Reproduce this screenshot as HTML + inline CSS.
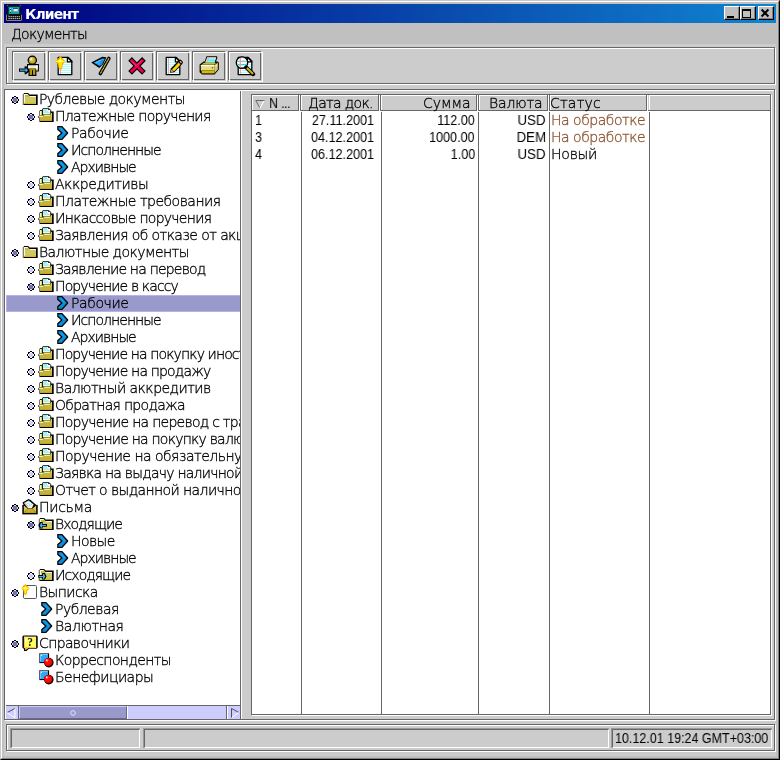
<!DOCTYPE html>
<html lang="ru"><head><meta charset="utf-8"><title>Клиент</title>
<style>
*{box-sizing:border-box;margin:0;padding:0}
html,body{width:780px;height:760px;overflow:hidden;background:#c0c0c0}
body{position:relative;font-family:"Liberation Sans",sans-serif;font-size:13px;color:#000;line-height:17px}
.a{position:absolute}
.root{position:absolute;left:0;top:0;width:780px;height:760px}
.cy,.lat,.ttext{will-change:transform}
.win{left:0;top:0;width:780px;height:760px;background:#c0c0c0;border-style:solid;border-width:1px;border-color:#c8c8c8 #000 #000 #c8c8c8}
.win2{left:1px;top:1px;width:778px;height:758px;border-style:solid;border-width:1px;border-color:#fff #808080 #808080 #fff}
.title{left:4px;top:4px;width:772px;height:19px;background:linear-gradient(90deg,#000080 0%,#1084d0 100%)}
.ttext{left:24.5px;top:5px;height:19px;line-height:19px;color:#fff;font-family:"DejaVu Sans","Liberation Sans",sans-serif;font-weight:bold;font-size:14px;letter-spacing:-.95px;white-space:nowrap}
.cb{top:6px;width:16px;height:14px;background:#c0c0c0;border-style:solid;border-width:1px;border-color:#fff #000 #000 #fff}
.cb i{position:absolute;left:0;top:0;right:0;bottom:0;border-style:solid;border-width:0 1px 1px 0;border-color:#808080}
.java{left:4px;top:44px;width:772px;height:712px;background:#cccccc}
.menu{left:11px;top:26px;height:17px;line-height:17px;white-space:nowrap}
.cy{font-family:"DejaVu Sans","Liberation Sans",sans-serif;font-weight:200;font-size:14px;letter-spacing:-.6px;-webkit-text-stroke:.3px currentColor}
.tb{top:51px;width:33px;height:29px;border:1px solid #666}
.tb:after{content:"";position:absolute;left:0;top:0;width:32px;height:28px;border-style:solid;border-color:#fff;border-width:1px 0 0 1px}
.tb:before{content:"";position:absolute;left:0px;top:0px;width:33px;height:29px;border-style:solid;border-color:#fff;border-width:0 1px 1px 0}
.tb svg{position:absolute;left:0;top:0}
.tree{left:5px;top:90px;width:235px;height:615px;background:#fff;overflow:hidden}
.row{position:absolute;left:0;height:17px;line-height:17px;white-space:nowrap}
.row span{position:absolute;top:0;white-space:nowrap}
.row svg{position:absolute;top:0}
.sel{left:1px;width:234px;background:#9999cc;border:1px solid #b4b4ea;border-right:0}
.lat{font-size:14px;transform:scaleX(.9);transform-origin:0 50%}
.latr{transform-origin:100% 50%}
.cell{position:absolute;height:17px;line-height:17px;white-space:nowrap}
.hd{position:absolute;top:94px;height:17px;border:1px solid #666;border-width:1px 1px 1px 1px;background:#cccccc}
.st{color:#8c5430}
</style></head>
<body>
<div class="a win"></div><div class="a win2"></div>
<div class="a title"></div>
<svg width="18" height="18" viewBox="0 0 18 18" style="position:absolute;left:5px;top:4px"><rect x="1.1" y="10.4" width="15.8" height="6.3" rx="1.2" fill="#b0b094"/><rect x="1.9" y="10.6" width="14.2" height="5.4" fill="#080808"/><path d="M3.4 12.7 H15 M3.4 14.6 H15" stroke="#c4c4c4" stroke-width="1" stroke-dasharray="1.5 .55"/><rect x="2.2" y="1.2" width="13.6" height="9.7" fill="#0c0c0c"/><rect x="2.2" y="1.2" width="1" height="1" fill="#909078"/><rect x="14.8" y="1.2" width="1" height="1" fill="#909078"/><rect x="3.7" y="2.9" width="10.6" height="7" fill="#14b0b0"/><rect x="3.7" y="2.9" width="10.6" height="1" fill="#109898"/><rect x="8.1" y="4" width="4.8" height="1" fill="#1848c8"/><rect x="8.6" y="5" width="4.1" height="2.6" fill="#f4ecec"/><rect x="8.6" y="7.6" width="4.1" height=".5" fill="#905050"/><rect x="4.9" y="4" width="1.2" height=".8" fill="#c8ffff"/><rect x="6.4" y="4.2" width="1.6" height=".4" fill="#60e8e8"/><rect x="6.4" y="5.4" width="1.6" height=".3" fill="#40d0d0"/><rect x="5" y="5.1" width="1" height=".9" fill="#101010"/><rect x="5.2" y="6" width=".7" height="2" fill="#e8f0f0"/><rect x="5" y="8" width="1" height=".9" fill="#101010"/><rect x="2.9" y="10.7" width="1.5" height=".9" fill="#0c8c30"/></svg>
<div class="a ttext">Клиент</div>
<div class="a cb" style="left:724px"><i></i><svg width="14" height="12" viewBox="0 0 14 12" style="position:absolute;left:0;top:0"><rect x="2" y="9" width="7" height="2" fill="#000"/></svg></div>
<div class="a cb" style="left:740px"><i></i><svg width="14" height="12" viewBox="0 0 14 12" style="position:absolute;left:0;top:0"><rect x="1.5" y="2.5" width="8" height="8" fill="none" stroke="#000" stroke-width="1"/><rect x="1" y="2" width="9" height="2" fill="#000"/></svg></div>
<div class="a cb" style="left:758px"><i></i><svg width="14" height="12" viewBox="0 0 14 12" style="position:absolute;left:0;top:0"><path d="M2.6 2.6 L9.4 9.4 M9.4 2.6 L2.6 9.4" stroke="#000" stroke-width="2.1" fill="none"/></svg></div>
<div class="a java"></div>
<div class="a menu cy" style="letter-spacing:-0.75px">Документы</div>
<div class="a" style="left:7px;top:48px;width:769px;height:37px;border:1px solid #fff"></div><div class="a" style="left:6px;top:47px;width:769px;height:37px;border:1px solid #666;"></div>
<div class="a tb" style="left:12px"><svg width="33" height="29" viewBox="0 0 33 29" style="position:absolute;left:-1px;top:-1px"><path d="M7 17.6 H12.6 V15.2 H14.2 L15 16 V13.1 H26.9 V20.6 H24.4 V25 H16.5 V21 L14.2 23.2 H12.6 V20.8 H7 Z" fill="#000"/><circle cx="20.3" cy="9.3" r="4.7" fill="#000"/><circle cx="20.3" cy="9.3" r="3.5" fill="#a88e14"/><circle cx="20" cy="9" r="2.9" fill="#c4b034"/><circle cx="19.6" cy="8.5" r="2" fill="#dccc58"/><circle cx="19.2" cy="8" r="1" fill="#fff8cc"/><rect x="16.1" y="14.3" width="9.6" height="3.2" fill="#fff"/><rect x="24.2" y="14.3" width="1.5" height="5.2" fill="#fff"/><rect x="17.8" y="15.3" width="5.4" height="1.5" fill="#e0e0e0"/><rect x="17.6" y="17.6" width="2.4" height="6.2" fill="#b8980c"/><rect x="21" y="17.6" width="2.3" height="6.2" fill="#b8980c"/><rect x="17.6" y="17.4" width="5.7" height="1.8" fill="#a48808"/><path d="M8 18.6 H13.6 V16.8 L16 19.2 L13.6 21.6 V19.8 H8 Z" fill="#38b4ff"/></svg></div>
<div class="a tb" style="left:48px"><svg width="33" height="29" viewBox="0 0 33 29" style="position:absolute;left:-1px;top:-1px"><path d="M10.2 6.4 H20.3 L23.8 9.9 V23.6 H10.2 Z" fill="#fff" stroke="#000" stroke-width="1.3" stroke-linejoin="round"/><path d="M11 11.5H23M11 13.5H23M11 15.5H23M11 17.5H23M11 19.5H23M11 21.5H23" stroke="#a8fcfc" stroke-width="1.1"/><path d="M11 8H19.5M11 9.7H19.5" stroke="#a8fcfc" stroke-width="1.1"/><path d="M12.5 7V23" stroke="#ffa0a8" stroke-width="1"/><path d="M19.4 6.4 V10.9 H23.9 Z" fill="#fff" stroke="#000" stroke-width="1.3" stroke-linejoin="round"/><g transform="translate(12.4 10.4) scale(1)"><path d="M0 -5.5 L2.2 -3 L5.4 0 L2.5 2.6 L1.8 7 L0 8.7 L-1.8 7 L-2.5 2.6 L-5.4 0 L-2.2 -3 Z" fill="#ffa400"/><path d="M0 -4.1 L1.5 -1.7 L4.4 0 L1.5 1.7 L1 6.5 L-1 6.5 L-1.5 1.7 L-4.4 0 L-1.5 -1.7 Z" fill="#fff400"/><rect x="-5" y="-.6" width="9.6" height="1.2" fill="#ffff10"/><rect x="-1.2" y="-1.2" width="2.2" height="1.8" fill="#fffff4"/></g></svg></div>
<div class="a tb" style="left:84px"><svg width="33" height="29" viewBox="0 0 33 29" style="position:absolute;left:-1px;top:-1px"><path d="M24.9 7.4 L16.3 22.6" stroke="#000" stroke-width="3.5" stroke-linecap="round"/><path d="M24.9 7.4 L16.3 22.6" stroke="#ffe050" stroke-width="1.15" stroke-dasharray="1.2 .35"/><path d="M7.2 11.6 L18.3 5.8 L22.4 6.2 L19.3 13 L15.3 17 L12.3 15 Z" fill="#000"/><path d="M9.6 11.7 L18.6 7.5 L20.8 7.8 L18 13.2 L15.3 15 L13.2 13.6 Z" fill="#28a8f8"/><path d="M16.6 9.4 L15.2 15.4 L17.8 13.4 L19.8 8.6 Z" fill="#1890e0"/><path d="M11.6 11.4 L17 8.8" stroke="#70ccff" stroke-width=".8"/></svg></div>
<div class="a tb" style="left:120px"><svg width="33" height="29" viewBox="0 0 33 29" style="position:absolute;left:-1px;top:-1px"><path d="M11.9 9.8 L22.1 20.1 M22.1 9.8 L11.9 20.1" stroke="#000" stroke-width="5.2" stroke-linecap="square"/><path d="M11.9 9.8 L22.1 20.1 M22.1 9.8 L11.9 20.1" stroke="#e4004c" stroke-width="3" stroke-linecap="square"/><path d="M11.6 10.2 L16.6 15.2 M21.6 9.6 L17.6 13.6" stroke="#ff5a8c" stroke-width=".8"/></svg></div>
<div class="a tb" style="left:156px"><svg width="33" height="29" viewBox="0 0 33 29" style="position:absolute;left:-1px;top:-1px"><path d="M10.2 6.4 H20.3 L23.8 9.9 V23.6 H10.2 Z" fill="#fff" stroke="#000" stroke-width="1.3" stroke-linejoin="round"/><path d="M11 11.5H23M11 13.5H23M11 15.5H23M11 17.5H23M11 19.5H23M11 21.5H23" stroke="#a8fcfc" stroke-width="1.1"/><path d="M11 8H19.5M11 9.7H19.5" stroke="#a8fcfc" stroke-width="1.1"/><path d="M12.5 7V23" stroke="#ffa0a8" stroke-width="1"/><path d="M19.4 6.4 V10.9 H23.9 Z" fill="#fff" stroke="#000" stroke-width="1.3" stroke-linejoin="round"/><path d="M14 21.8 L14.8 17.6 L22.6 9.4 L24.6 8.6 L27 11 L26.2 13 L18.4 21.2 Z" fill="#000"/><path d="M16.2 18.4 L22.6 11.6 L24.4 13.4 L18 20.2 Z" fill="#ffe800"/><path d="M16.2 18.4 L22.6 11.6 L23.2 12.2 L16.8 19 Z" fill="#ffb000"/><path d="M17.5 19.7 L23.9 12.9 L24.4 13.4 L18 20.2 Z" fill="#ffb000"/><path d="M23.4 10.8 L24.6 9.7 L26 11.2 L25 12.4 Z" fill="#ff8c94"/><path d="M14.9 21 L15.5 18.6 L17.6 20.6 Z" fill="#f0d8a0"/><path d="M14.8 21.3 L15.1 20.2 L15.9 21 Z" fill="#a06810"/></svg></div>
<div class="a tb" style="left:192px"><svg width="33" height="29" viewBox="0 0 33 29" style="position:absolute;left:-1px;top:-1px"><path d="M7.6 13.6 L11.6 10.6 H12.6 L14.6 5.2 H25 L25.4 6.6 L24 10.4 H25.6 L26.8 11.4 V18.6 L22.6 23.4 H10 L7.6 21.2 Z" fill="#000"/><path d="M15.2 6.2 H24.3 L22.6 11.6 H13.2 Z" fill="#fff"/><path d="M15 8 H23.5 M14.4 9.8 H23 M13.8 11.2 H22.6" stroke="#30e0e8" stroke-width="1.1"/><path d="M16.8 6.2 L15 11.6" stroke="#ff9c90" stroke-width=".9"/><path d="M9.2 13.8 L12 11.8 H24.4 L22.2 13.8 Z" fill="#c8b838"/><rect x="8.8" y="14" width="13.8" height="5" fill="#e4dc88"/><rect x="8.8" y="14" width="13.8" height="1.2" fill="#fffce0"/><rect x="8.8" y="19" width="13.8" height="1" fill="#a08c10"/><rect x="9.6" y="20" width="12.6" height="2.4" fill="#d0b818"/><path d="M22.6 14 L25.8 11.6 V18.2 L22.4 22.4 Z" fill="#d8cc60"/><path d="M23.4 14.4 L25.2 13 V15 L23.4 16.6 Z" fill="#f0eab0"/><path d="M19.2 16.2 H21.4 L20.8 18 Z" fill="#607818"/></svg></div>
<div class="a tb" style="left:228px"><svg width="33" height="29" viewBox="0 0 33 29" style="position:absolute;left:-1px;top:-1px"><path d="M10.2 6.4 H20.3 L23.8 9.9 V23.6 H10.2 Z" fill="#fff" stroke="#000" stroke-width="1.3" stroke-linejoin="round"/><path d="M11 11.5H23M11 13.5H23M11 15.5H23M11 17.5H23M11 19.5H23M11 21.5H23" stroke="#a8fcfc" stroke-width="1.1"/><path d="M11 8H19.5M11 9.7H19.5" stroke="#a8fcfc" stroke-width="1.1"/><path d="M12.5 7V23" stroke="#ffa0a8" stroke-width="1"/><path d="M19.4 6.4 V10.9 H23.9 Z" fill="#fff" stroke="#000" stroke-width="1.3" stroke-linejoin="round"/><circle cx="14" cy="11.6" r="5.7" fill="#fff" stroke="#000" stroke-width="1.4"/><path d="M9.3 10.2 H18.7 M9.3 13.6 H18.7" stroke="#20d8dc" stroke-width="1.1"/><path d="M12.3 7 V16.4" stroke="#ff98a0" stroke-width="1.3"/><path d="M18.2 16.4 L25.2 23.2" stroke="#000" stroke-width="4" stroke-linecap="round"/><path d="M18.8 17 L25 23" stroke="#c8a408" stroke-width="1.9" stroke-linecap="butt"/><path d="M19.6 17 L25.4 22.6" stroke="#f0d850" stroke-width=".6"/></svg></div>
<div class="a" style="left:5px;top:90px;width:771px;height:631px;border:1px solid #fff"></div><div class="a" style="left:4px;top:89px;width:771px;height:631px;border:1px solid #666;"></div>
<div class="a tree"><div class="row" style="top:1px"><svg width="8" height="8" viewBox="0 0 8 8" style="left:6px;top:5px"><path d="M2 2h4v4h-4z" fill="#7272b2"/><path d="M3 1h1v1h-1zM4 1h1v1h-1zM1 3h1v1h-1zM1 4h1v1h-1zM6 3h1v1h-1zM6 4h1v1h-1zM3 6h1v1h-1zM4 6h1v1h-1z" fill="#dcdcff"/><path d="M3 0h1v1h-1zM4 0h1v1h-1zM1 1h1v1h-1zM2 1h1v1h-1zM5 1h1v1h-1zM6 1h1v1h-1zM1 2h1v1h-1zM6 2h1v1h-1zM0 3h1v1h-1zM7 3h1v1h-1zM0 4h1v1h-1zM7 4h1v1h-1zM1 5h1v1h-1zM6 5h1v1h-1zM1 6h1v1h-1zM2 6h1v1h-1zM5 6h1v1h-1zM6 6h1v1h-1zM3 7h1v1h-1zM4 7h1v1h-1z" fill="#000"/></svg><svg width="16" height="17" viewBox="0 0 16 17" style="left:17px;top:0px"><path d="M0.7 2.9 H2 V14 H0.7 Z" fill="#7c7c84"/><path d="M1.8 2.05 H6.1 L7.6 3.55 H15.7 V14 H1.8 Z" fill="#000"/><path d="M1.9 3.1 H5.8 L7.5 4.95 H14 V13 H1.9 Z" fill="#cec866"/><path d="M3 4 H6 L7.7 5.8 H3 Z" fill="#c6b838"/><path d="M1.9 3.1 H3 V12 H1.9 Z M1.9 3.1 H5.7 V3.9 H1.9 Z M7.9 5 H14 V5.9 H7.9 Z" fill="#fffad8"/><path d="M1.9 11.8 H14 V13 H1.9 Z" fill="#d8b814"/></svg><span class="cy" style="left:33.5px;letter-spacing:-0.57px">Рублевые документы</span></div><div class="row" style="top:18px"><svg width="8" height="8" viewBox="0 0 8 8" style="left:22px;top:5px"><path d="M2 2h4v4h-4z" fill="#7272b2"/><path d="M3 1h1v1h-1zM4 1h1v1h-1zM1 3h1v1h-1zM1 4h1v1h-1zM6 3h1v1h-1zM6 4h1v1h-1zM3 6h1v1h-1zM4 6h1v1h-1z" fill="#dcdcff"/><path d="M3 0h1v1h-1zM4 0h1v1h-1zM1 1h1v1h-1zM2 1h1v1h-1zM5 1h1v1h-1zM6 1h1v1h-1zM1 2h1v1h-1zM6 2h1v1h-1zM0 3h1v1h-1zM7 3h1v1h-1zM0 4h1v1h-1zM7 4h1v1h-1zM1 5h1v1h-1zM6 5h1v1h-1zM1 6h1v1h-1zM2 6h1v1h-1zM5 6h1v1h-1zM6 6h1v1h-1zM3 7h1v1h-1zM4 7h1v1h-1z" fill="#000"/></svg><svg width="17" height="17" viewBox="0 0 17 17" style="left:33px;top:0px"><path d="M4 1.2 L5 0.15 H10.9 L13.2 2.3 V3.6 H15.7 V14 H1.6 V10.6 L0.2 9.6 V8.4 L1.6 7.3 V2.9 L2 2.1 H4 Z" fill="#000"/><path d="M1.6 3 V13.6" stroke="#6c6c74" stroke-width="1"/><rect x="4.9" y="1" width="7.3" height="5.4" fill="#fff"/><rect x="4.9" y="1" width="4.2" height="1.9" fill="#88f4f4"/><rect x="10" y="1" width="2.2" height=".9" fill="#000"/><rect x="10" y="1.9" width="2.2" height="1.2" fill="#fff"/><rect x="5.2" y="3.2" width="5.4" height=".6" fill="#c8c8c8"/><rect x="5.1" y="4" width="7.1" height="1.3" fill="#98f8f8"/><rect x="2" y="2.9" width="1.9" height="4.2" fill="#fff4b0"/><rect x="3.2" y="2.9" width=".7" height="4.2" fill="#d8c440"/><path d="M1.3 8.3 L2.2 7.2 H6.1 V6 H14 V12.9 H2 V10.2 L1.3 9.6 Z" fill="#c2b444"/><rect x="6.1" y="6" width="7.9" height="1" fill="#a88c10"/><rect x="12.9" y="4.9" width="1.1" height="3.8" fill="#dccc50"/><rect x="6.3" y="7.2" width="5.5" height=".8" fill="#fff8d0"/><rect x="1.2" y="8.1" width="3.7" height=".9" fill="#fff8d0"/><rect x="2" y="11.9" width="12" height="1" fill="#caa408"/></svg><span class="cy" style="left:49.5px;letter-spacing:-0.68px">Платежные поручения</span></div><div class="row" style="top:35px"><svg width="13" height="17" viewBox="0 0 13 17" style="left:52px;top:0px"><path d="M0.2 1.1 H5.2 L11.2 7.4 V8.6 L5.2 14.9 H0.2 V11.2 L3.9 8 L0.2 4.8 Z" fill="#000"/><path d="M1.4 2.2 H4.7 L9.8 8 L4.7 13.8 H1.4 V11.9 L5.7 8 L1.4 4.1 Z" fill="#0c8cd8"/><path d="M3 3 H4.3 L8.6 8 L6.6 8 Z" fill="#10a0f0"/></svg><span class="cy" style="left:65.5px;letter-spacing:-0.40px">Рабочие</span></div><div class="row" style="top:52px"><svg width="13" height="17" viewBox="0 0 13 17" style="left:52px;top:0px"><path d="M0.2 1.1 H5.2 L11.2 7.4 V8.6 L5.2 14.9 H0.2 V11.2 L3.9 8 L0.2 4.8 Z" fill="#000"/><path d="M1.4 2.2 H4.7 L9.8 8 L4.7 13.8 H1.4 V11.9 L5.7 8 L1.4 4.1 Z" fill="#0c8cd8"/><path d="M3 3 H4.3 L8.6 8 L6.6 8 Z" fill="#10a0f0"/></svg><span class="cy" style="left:65.5px;letter-spacing:-0.97px">Исполненные</span></div><div class="row" style="top:69px"><svg width="13" height="17" viewBox="0 0 13 17" style="left:52px;top:0px"><path d="M0.2 1.1 H5.2 L11.2 7.4 V8.6 L5.2 14.9 H0.2 V11.2 L3.9 8 L0.2 4.8 Z" fill="#000"/><path d="M1.4 2.2 H4.7 L9.8 8 L4.7 13.8 H1.4 V11.9 L5.7 8 L1.4 4.1 Z" fill="#0c8cd8"/><path d="M3 3 H4.3 L8.6 8 L6.6 8 Z" fill="#10a0f0"/></svg><span class="cy" style="left:65.5px;letter-spacing:-0.99px">Архивные</span></div><div class="row" style="top:86px"><svg width="8" height="8" viewBox="0 0 8 8" style="left:22px;top:5px"><path d="M2 2h4v4h-4z" fill="#ccccff"/><path d="M3 1h1v1h-1zM4 1h1v1h-1zM1 3h1v1h-1zM1 4h1v1h-1zM6 3h1v1h-1zM6 4h1v1h-1zM3 6h1v1h-1zM4 6h1v1h-1z" fill="#ffffff"/><path d="M3 0h1v1h-1zM4 0h1v1h-1zM1 1h1v1h-1zM2 1h1v1h-1zM5 1h1v1h-1zM6 1h1v1h-1zM1 2h1v1h-1zM6 2h1v1h-1zM0 3h1v1h-1zM7 3h1v1h-1zM0 4h1v1h-1zM7 4h1v1h-1zM1 5h1v1h-1zM6 5h1v1h-1zM1 6h1v1h-1zM2 6h1v1h-1zM5 6h1v1h-1zM6 6h1v1h-1zM3 7h1v1h-1zM4 7h1v1h-1z" fill="#000"/></svg><svg width="17" height="17" viewBox="0 0 17 17" style="left:33px;top:0px"><path d="M4 1.2 L5 0.15 H10.9 L13.2 2.3 V3.6 H15.7 V14 H1.6 V10.6 L0.2 9.6 V8.4 L1.6 7.3 V2.9 L2 2.1 H4 Z" fill="#000"/><path d="M1.6 3 V13.6" stroke="#6c6c74" stroke-width="1"/><rect x="4.9" y="1" width="7.3" height="5.4" fill="#fff"/><rect x="4.9" y="1" width="4.2" height="1.9" fill="#88f4f4"/><rect x="10" y="1" width="2.2" height=".9" fill="#000"/><rect x="10" y="1.9" width="2.2" height="1.2" fill="#fff"/><rect x="5.2" y="3.2" width="5.4" height=".6" fill="#c8c8c8"/><rect x="5.1" y="4" width="7.1" height="1.3" fill="#98f8f8"/><rect x="2" y="2.9" width="1.9" height="4.2" fill="#fff4b0"/><rect x="3.2" y="2.9" width=".7" height="4.2" fill="#d8c440"/><path d="M1.3 8.3 L2.2 7.2 H6.1 V6 H14 V12.9 H2 V10.2 L1.3 9.6 Z" fill="#c2b444"/><rect x="6.1" y="6" width="7.9" height="1" fill="#a88c10"/><rect x="12.9" y="4.9" width="1.1" height="3.8" fill="#dccc50"/><rect x="6.3" y="7.2" width="5.5" height=".8" fill="#fff8d0"/><rect x="1.2" y="8.1" width="3.7" height=".9" fill="#fff8d0"/><rect x="2" y="11.9" width="12" height="1" fill="#caa408"/></svg><span class="cy" style="left:49.5px;letter-spacing:-0.46px">Аккредитивы</span></div><div class="row" style="top:103px"><svg width="8" height="8" viewBox="0 0 8 8" style="left:22px;top:5px"><path d="M2 2h4v4h-4z" fill="#ccccff"/><path d="M3 1h1v1h-1zM4 1h1v1h-1zM1 3h1v1h-1zM1 4h1v1h-1zM6 3h1v1h-1zM6 4h1v1h-1zM3 6h1v1h-1zM4 6h1v1h-1z" fill="#ffffff"/><path d="M3 0h1v1h-1zM4 0h1v1h-1zM1 1h1v1h-1zM2 1h1v1h-1zM5 1h1v1h-1zM6 1h1v1h-1zM1 2h1v1h-1zM6 2h1v1h-1zM0 3h1v1h-1zM7 3h1v1h-1zM0 4h1v1h-1zM7 4h1v1h-1zM1 5h1v1h-1zM6 5h1v1h-1zM1 6h1v1h-1zM2 6h1v1h-1zM5 6h1v1h-1zM6 6h1v1h-1zM3 7h1v1h-1zM4 7h1v1h-1z" fill="#000"/></svg><svg width="17" height="17" viewBox="0 0 17 17" style="left:33px;top:0px"><path d="M4 1.2 L5 0.15 H10.9 L13.2 2.3 V3.6 H15.7 V14 H1.6 V10.6 L0.2 9.6 V8.4 L1.6 7.3 V2.9 L2 2.1 H4 Z" fill="#000"/><path d="M1.6 3 V13.6" stroke="#6c6c74" stroke-width="1"/><rect x="4.9" y="1" width="7.3" height="5.4" fill="#fff"/><rect x="4.9" y="1" width="4.2" height="1.9" fill="#88f4f4"/><rect x="10" y="1" width="2.2" height=".9" fill="#000"/><rect x="10" y="1.9" width="2.2" height="1.2" fill="#fff"/><rect x="5.2" y="3.2" width="5.4" height=".6" fill="#c8c8c8"/><rect x="5.1" y="4" width="7.1" height="1.3" fill="#98f8f8"/><rect x="2" y="2.9" width="1.9" height="4.2" fill="#fff4b0"/><rect x="3.2" y="2.9" width=".7" height="4.2" fill="#d8c440"/><path d="M1.3 8.3 L2.2 7.2 H6.1 V6 H14 V12.9 H2 V10.2 L1.3 9.6 Z" fill="#c2b444"/><rect x="6.1" y="6" width="7.9" height="1" fill="#a88c10"/><rect x="12.9" y="4.9" width="1.1" height="3.8" fill="#dccc50"/><rect x="6.3" y="7.2" width="5.5" height=".8" fill="#fff8d0"/><rect x="1.2" y="8.1" width="3.7" height=".9" fill="#fff8d0"/><rect x="2" y="11.9" width="12" height="1" fill="#caa408"/></svg><span class="cy" style="left:49.5px;letter-spacing:-0.51px">Платежные требования</span></div><div class="row" style="top:120px"><svg width="8" height="8" viewBox="0 0 8 8" style="left:22px;top:5px"><path d="M2 2h4v4h-4z" fill="#ccccff"/><path d="M3 1h1v1h-1zM4 1h1v1h-1zM1 3h1v1h-1zM1 4h1v1h-1zM6 3h1v1h-1zM6 4h1v1h-1zM3 6h1v1h-1zM4 6h1v1h-1z" fill="#ffffff"/><path d="M3 0h1v1h-1zM4 0h1v1h-1zM1 1h1v1h-1zM2 1h1v1h-1zM5 1h1v1h-1zM6 1h1v1h-1zM1 2h1v1h-1zM6 2h1v1h-1zM0 3h1v1h-1zM7 3h1v1h-1zM0 4h1v1h-1zM7 4h1v1h-1zM1 5h1v1h-1zM6 5h1v1h-1zM1 6h1v1h-1zM2 6h1v1h-1zM5 6h1v1h-1zM6 6h1v1h-1zM3 7h1v1h-1zM4 7h1v1h-1z" fill="#000"/></svg><svg width="17" height="17" viewBox="0 0 17 17" style="left:33px;top:0px"><path d="M4 1.2 L5 0.15 H10.9 L13.2 2.3 V3.6 H15.7 V14 H1.6 V10.6 L0.2 9.6 V8.4 L1.6 7.3 V2.9 L2 2.1 H4 Z" fill="#000"/><path d="M1.6 3 V13.6" stroke="#6c6c74" stroke-width="1"/><rect x="4.9" y="1" width="7.3" height="5.4" fill="#fff"/><rect x="4.9" y="1" width="4.2" height="1.9" fill="#88f4f4"/><rect x="10" y="1" width="2.2" height=".9" fill="#000"/><rect x="10" y="1.9" width="2.2" height="1.2" fill="#fff"/><rect x="5.2" y="3.2" width="5.4" height=".6" fill="#c8c8c8"/><rect x="5.1" y="4" width="7.1" height="1.3" fill="#98f8f8"/><rect x="2" y="2.9" width="1.9" height="4.2" fill="#fff4b0"/><rect x="3.2" y="2.9" width=".7" height="4.2" fill="#d8c440"/><path d="M1.3 8.3 L2.2 7.2 H6.1 V6 H14 V12.9 H2 V10.2 L1.3 9.6 Z" fill="#c2b444"/><rect x="6.1" y="6" width="7.9" height="1" fill="#a88c10"/><rect x="12.9" y="4.9" width="1.1" height="3.8" fill="#dccc50"/><rect x="6.3" y="7.2" width="5.5" height=".8" fill="#fff8d0"/><rect x="1.2" y="8.1" width="3.7" height=".9" fill="#fff8d0"/><rect x="2" y="11.9" width="12" height="1" fill="#caa408"/></svg><span class="cy" style="left:49.5px;letter-spacing:-0.74px">Инкассовые поручения</span></div><div class="row" style="top:137px"><svg width="8" height="8" viewBox="0 0 8 8" style="left:22px;top:5px"><path d="M2 2h4v4h-4z" fill="#ccccff"/><path d="M3 1h1v1h-1zM4 1h1v1h-1zM1 3h1v1h-1zM1 4h1v1h-1zM6 3h1v1h-1zM6 4h1v1h-1zM3 6h1v1h-1zM4 6h1v1h-1z" fill="#ffffff"/><path d="M3 0h1v1h-1zM4 0h1v1h-1zM1 1h1v1h-1zM2 1h1v1h-1zM5 1h1v1h-1zM6 1h1v1h-1zM1 2h1v1h-1zM6 2h1v1h-1zM0 3h1v1h-1zM7 3h1v1h-1zM0 4h1v1h-1zM7 4h1v1h-1zM1 5h1v1h-1zM6 5h1v1h-1zM1 6h1v1h-1zM2 6h1v1h-1zM5 6h1v1h-1zM6 6h1v1h-1zM3 7h1v1h-1zM4 7h1v1h-1z" fill="#000"/></svg><svg width="17" height="17" viewBox="0 0 17 17" style="left:33px;top:0px"><path d="M4 1.2 L5 0.15 H10.9 L13.2 2.3 V3.6 H15.7 V14 H1.6 V10.6 L0.2 9.6 V8.4 L1.6 7.3 V2.9 L2 2.1 H4 Z" fill="#000"/><path d="M1.6 3 V13.6" stroke="#6c6c74" stroke-width="1"/><rect x="4.9" y="1" width="7.3" height="5.4" fill="#fff"/><rect x="4.9" y="1" width="4.2" height="1.9" fill="#88f4f4"/><rect x="10" y="1" width="2.2" height=".9" fill="#000"/><rect x="10" y="1.9" width="2.2" height="1.2" fill="#fff"/><rect x="5.2" y="3.2" width="5.4" height=".6" fill="#c8c8c8"/><rect x="5.1" y="4" width="7.1" height="1.3" fill="#98f8f8"/><rect x="2" y="2.9" width="1.9" height="4.2" fill="#fff4b0"/><rect x="3.2" y="2.9" width=".7" height="4.2" fill="#d8c440"/><path d="M1.3 8.3 L2.2 7.2 H6.1 V6 H14 V12.9 H2 V10.2 L1.3 9.6 Z" fill="#c2b444"/><rect x="6.1" y="6" width="7.9" height="1" fill="#a88c10"/><rect x="12.9" y="4.9" width="1.1" height="3.8" fill="#dccc50"/><rect x="6.3" y="7.2" width="5.5" height=".8" fill="#fff8d0"/><rect x="1.2" y="8.1" width="3.7" height=".9" fill="#fff8d0"/><rect x="2" y="11.9" width="12" height="1" fill="#caa408"/></svg><span class="cy" style="left:49.5px;letter-spacing:-0.59px">Заявления об отказе от акц</span></div><div class="row" style="top:154px"><svg width="8" height="8" viewBox="0 0 8 8" style="left:6px;top:5px"><path d="M2 2h4v4h-4z" fill="#7272b2"/><path d="M3 1h1v1h-1zM4 1h1v1h-1zM1 3h1v1h-1zM1 4h1v1h-1zM6 3h1v1h-1zM6 4h1v1h-1zM3 6h1v1h-1zM4 6h1v1h-1z" fill="#dcdcff"/><path d="M3 0h1v1h-1zM4 0h1v1h-1zM1 1h1v1h-1zM2 1h1v1h-1zM5 1h1v1h-1zM6 1h1v1h-1zM1 2h1v1h-1zM6 2h1v1h-1zM0 3h1v1h-1zM7 3h1v1h-1zM0 4h1v1h-1zM7 4h1v1h-1zM1 5h1v1h-1zM6 5h1v1h-1zM1 6h1v1h-1zM2 6h1v1h-1zM5 6h1v1h-1zM6 6h1v1h-1zM3 7h1v1h-1zM4 7h1v1h-1z" fill="#000"/></svg><svg width="16" height="17" viewBox="0 0 16 17" style="left:17px;top:0px"><path d="M0.7 2.9 H2 V14 H0.7 Z" fill="#7c7c84"/><path d="M1.8 2.05 H6.1 L7.6 3.55 H15.7 V14 H1.8 Z" fill="#000"/><path d="M1.9 3.1 H5.8 L7.5 4.95 H14 V13 H1.9 Z" fill="#cec866"/><path d="M3 4 H6 L7.7 5.8 H3 Z" fill="#c6b838"/><path d="M1.9 3.1 H3 V12 H1.9 Z M1.9 3.1 H5.7 V3.9 H1.9 Z M7.9 5 H14 V5.9 H7.9 Z" fill="#fffad8"/><path d="M1.9 11.8 H14 V13 H1.9 Z" fill="#d8b814"/></svg><span class="cy" style="left:33.5px;letter-spacing:-0.57px">Валютные документы</span></div><div class="row" style="top:171px"><svg width="8" height="8" viewBox="0 0 8 8" style="left:22px;top:5px"><path d="M2 2h4v4h-4z" fill="#ccccff"/><path d="M3 1h1v1h-1zM4 1h1v1h-1zM1 3h1v1h-1zM1 4h1v1h-1zM6 3h1v1h-1zM6 4h1v1h-1zM3 6h1v1h-1zM4 6h1v1h-1z" fill="#ffffff"/><path d="M3 0h1v1h-1zM4 0h1v1h-1zM1 1h1v1h-1zM2 1h1v1h-1zM5 1h1v1h-1zM6 1h1v1h-1zM1 2h1v1h-1zM6 2h1v1h-1zM0 3h1v1h-1zM7 3h1v1h-1zM0 4h1v1h-1zM7 4h1v1h-1zM1 5h1v1h-1zM6 5h1v1h-1zM1 6h1v1h-1zM2 6h1v1h-1zM5 6h1v1h-1zM6 6h1v1h-1zM3 7h1v1h-1zM4 7h1v1h-1z" fill="#000"/></svg><svg width="17" height="17" viewBox="0 0 17 17" style="left:33px;top:0px"><path d="M4 1.2 L5 0.15 H10.9 L13.2 2.3 V3.6 H15.7 V14 H1.6 V10.6 L0.2 9.6 V8.4 L1.6 7.3 V2.9 L2 2.1 H4 Z" fill="#000"/><path d="M1.6 3 V13.6" stroke="#6c6c74" stroke-width="1"/><rect x="4.9" y="1" width="7.3" height="5.4" fill="#fff"/><rect x="4.9" y="1" width="4.2" height="1.9" fill="#88f4f4"/><rect x="10" y="1" width="2.2" height=".9" fill="#000"/><rect x="10" y="1.9" width="2.2" height="1.2" fill="#fff"/><rect x="5.2" y="3.2" width="5.4" height=".6" fill="#c8c8c8"/><rect x="5.1" y="4" width="7.1" height="1.3" fill="#98f8f8"/><rect x="2" y="2.9" width="1.9" height="4.2" fill="#fff4b0"/><rect x="3.2" y="2.9" width=".7" height="4.2" fill="#d8c440"/><path d="M1.3 8.3 L2.2 7.2 H6.1 V6 H14 V12.9 H2 V10.2 L1.3 9.6 Z" fill="#c2b444"/><rect x="6.1" y="6" width="7.9" height="1" fill="#a88c10"/><rect x="12.9" y="4.9" width="1.1" height="3.8" fill="#dccc50"/><rect x="6.3" y="7.2" width="5.5" height=".8" fill="#fff8d0"/><rect x="1.2" y="8.1" width="3.7" height=".9" fill="#fff8d0"/><rect x="2" y="11.9" width="12" height="1" fill="#caa408"/></svg><span class="cy" style="left:49.5px;letter-spacing:-0.81px">Заявление на перевод</span></div><div class="row" style="top:188px"><svg width="8" height="8" viewBox="0 0 8 8" style="left:22px;top:5px"><path d="M2 2h4v4h-4z" fill="#7272b2"/><path d="M3 1h1v1h-1zM4 1h1v1h-1zM1 3h1v1h-1zM1 4h1v1h-1zM6 3h1v1h-1zM6 4h1v1h-1zM3 6h1v1h-1zM4 6h1v1h-1z" fill="#dcdcff"/><path d="M3 0h1v1h-1zM4 0h1v1h-1zM1 1h1v1h-1zM2 1h1v1h-1zM5 1h1v1h-1zM6 1h1v1h-1zM1 2h1v1h-1zM6 2h1v1h-1zM0 3h1v1h-1zM7 3h1v1h-1zM0 4h1v1h-1zM7 4h1v1h-1zM1 5h1v1h-1zM6 5h1v1h-1zM1 6h1v1h-1zM2 6h1v1h-1zM5 6h1v1h-1zM6 6h1v1h-1zM3 7h1v1h-1zM4 7h1v1h-1z" fill="#000"/></svg><svg width="17" height="17" viewBox="0 0 17 17" style="left:33px;top:0px"><path d="M4 1.2 L5 0.15 H10.9 L13.2 2.3 V3.6 H15.7 V14 H1.6 V10.6 L0.2 9.6 V8.4 L1.6 7.3 V2.9 L2 2.1 H4 Z" fill="#000"/><path d="M1.6 3 V13.6" stroke="#6c6c74" stroke-width="1"/><rect x="4.9" y="1" width="7.3" height="5.4" fill="#fff"/><rect x="4.9" y="1" width="4.2" height="1.9" fill="#88f4f4"/><rect x="10" y="1" width="2.2" height=".9" fill="#000"/><rect x="10" y="1.9" width="2.2" height="1.2" fill="#fff"/><rect x="5.2" y="3.2" width="5.4" height=".6" fill="#c8c8c8"/><rect x="5.1" y="4" width="7.1" height="1.3" fill="#98f8f8"/><rect x="2" y="2.9" width="1.9" height="4.2" fill="#fff4b0"/><rect x="3.2" y="2.9" width=".7" height="4.2" fill="#d8c440"/><path d="M1.3 8.3 L2.2 7.2 H6.1 V6 H14 V12.9 H2 V10.2 L1.3 9.6 Z" fill="#c2b444"/><rect x="6.1" y="6" width="7.9" height="1" fill="#a88c10"/><rect x="12.9" y="4.9" width="1.1" height="3.8" fill="#dccc50"/><rect x="6.3" y="7.2" width="5.5" height=".8" fill="#fff8d0"/><rect x="1.2" y="8.1" width="3.7" height=".9" fill="#fff8d0"/><rect x="2" y="11.9" width="12" height="1" fill="#caa408"/></svg><span class="cy" style="left:49.5px;letter-spacing:-0.87px">Поручение в кассу</span></div><div class="row sel" style="top:205px"></div><div class="row" style="top:205px"><svg width="13" height="17" viewBox="0 0 13 17" style="left:52px;top:0px"><path d="M0.2 1.1 H5.2 L11.2 7.4 V8.6 L5.2 14.9 H0.2 V11.2 L3.9 8 L0.2 4.8 Z" fill="#000"/><path d="M1.4 2.2 H4.7 L9.8 8 L4.7 13.8 H1.4 V11.9 L5.7 8 L1.4 4.1 Z" fill="#0c8cd8"/><path d="M3 3 H4.3 L8.6 8 L6.6 8 Z" fill="#10a0f0"/></svg><span class="cy" style="left:65.5px;letter-spacing:-0.40px">Рабочие</span></div><div class="row" style="top:222px"><svg width="13" height="17" viewBox="0 0 13 17" style="left:52px;top:0px"><path d="M0.2 1.1 H5.2 L11.2 7.4 V8.6 L5.2 14.9 H0.2 V11.2 L3.9 8 L0.2 4.8 Z" fill="#000"/><path d="M1.4 2.2 H4.7 L9.8 8 L4.7 13.8 H1.4 V11.9 L5.7 8 L1.4 4.1 Z" fill="#0c8cd8"/><path d="M3 3 H4.3 L8.6 8 L6.6 8 Z" fill="#10a0f0"/></svg><span class="cy" style="left:65.5px;letter-spacing:-0.97px">Исполненные</span></div><div class="row" style="top:239px"><svg width="13" height="17" viewBox="0 0 13 17" style="left:52px;top:0px"><path d="M0.2 1.1 H5.2 L11.2 7.4 V8.6 L5.2 14.9 H0.2 V11.2 L3.9 8 L0.2 4.8 Z" fill="#000"/><path d="M1.4 2.2 H4.7 L9.8 8 L4.7 13.8 H1.4 V11.9 L5.7 8 L1.4 4.1 Z" fill="#0c8cd8"/><path d="M3 3 H4.3 L8.6 8 L6.6 8 Z" fill="#10a0f0"/></svg><span class="cy" style="left:65.5px;letter-spacing:-0.99px">Архивные</span></div><div class="row" style="top:256px"><svg width="8" height="8" viewBox="0 0 8 8" style="left:22px;top:5px"><path d="M2 2h4v4h-4z" fill="#ccccff"/><path d="M3 1h1v1h-1zM4 1h1v1h-1zM1 3h1v1h-1zM1 4h1v1h-1zM6 3h1v1h-1zM6 4h1v1h-1zM3 6h1v1h-1zM4 6h1v1h-1z" fill="#ffffff"/><path d="M3 0h1v1h-1zM4 0h1v1h-1zM1 1h1v1h-1zM2 1h1v1h-1zM5 1h1v1h-1zM6 1h1v1h-1zM1 2h1v1h-1zM6 2h1v1h-1zM0 3h1v1h-1zM7 3h1v1h-1zM0 4h1v1h-1zM7 4h1v1h-1zM1 5h1v1h-1zM6 5h1v1h-1zM1 6h1v1h-1zM2 6h1v1h-1zM5 6h1v1h-1zM6 6h1v1h-1zM3 7h1v1h-1zM4 7h1v1h-1z" fill="#000"/></svg><svg width="17" height="17" viewBox="0 0 17 17" style="left:33px;top:0px"><path d="M4 1.2 L5 0.15 H10.9 L13.2 2.3 V3.6 H15.7 V14 H1.6 V10.6 L0.2 9.6 V8.4 L1.6 7.3 V2.9 L2 2.1 H4 Z" fill="#000"/><path d="M1.6 3 V13.6" stroke="#6c6c74" stroke-width="1"/><rect x="4.9" y="1" width="7.3" height="5.4" fill="#fff"/><rect x="4.9" y="1" width="4.2" height="1.9" fill="#88f4f4"/><rect x="10" y="1" width="2.2" height=".9" fill="#000"/><rect x="10" y="1.9" width="2.2" height="1.2" fill="#fff"/><rect x="5.2" y="3.2" width="5.4" height=".6" fill="#c8c8c8"/><rect x="5.1" y="4" width="7.1" height="1.3" fill="#98f8f8"/><rect x="2" y="2.9" width="1.9" height="4.2" fill="#fff4b0"/><rect x="3.2" y="2.9" width=".7" height="4.2" fill="#d8c440"/><path d="M1.3 8.3 L2.2 7.2 H6.1 V6 H14 V12.9 H2 V10.2 L1.3 9.6 Z" fill="#c2b444"/><rect x="6.1" y="6" width="7.9" height="1" fill="#a88c10"/><rect x="12.9" y="4.9" width="1.1" height="3.8" fill="#dccc50"/><rect x="6.3" y="7.2" width="5.5" height=".8" fill="#fff8d0"/><rect x="1.2" y="8.1" width="3.7" height=".9" fill="#fff8d0"/><rect x="2" y="11.9" width="12" height="1" fill="#caa408"/></svg><span class="cy" style="left:49.5px;letter-spacing:-0.89px">Поручение на покупку иност</span></div><div class="row" style="top:273px"><svg width="8" height="8" viewBox="0 0 8 8" style="left:22px;top:5px"><path d="M2 2h4v4h-4z" fill="#ccccff"/><path d="M3 1h1v1h-1zM4 1h1v1h-1zM1 3h1v1h-1zM1 4h1v1h-1zM6 3h1v1h-1zM6 4h1v1h-1zM3 6h1v1h-1zM4 6h1v1h-1z" fill="#ffffff"/><path d="M3 0h1v1h-1zM4 0h1v1h-1zM1 1h1v1h-1zM2 1h1v1h-1zM5 1h1v1h-1zM6 1h1v1h-1zM1 2h1v1h-1zM6 2h1v1h-1zM0 3h1v1h-1zM7 3h1v1h-1zM0 4h1v1h-1zM7 4h1v1h-1zM1 5h1v1h-1zM6 5h1v1h-1zM1 6h1v1h-1zM2 6h1v1h-1zM5 6h1v1h-1zM6 6h1v1h-1zM3 7h1v1h-1zM4 7h1v1h-1z" fill="#000"/></svg><svg width="17" height="17" viewBox="0 0 17 17" style="left:33px;top:0px"><path d="M4 1.2 L5 0.15 H10.9 L13.2 2.3 V3.6 H15.7 V14 H1.6 V10.6 L0.2 9.6 V8.4 L1.6 7.3 V2.9 L2 2.1 H4 Z" fill="#000"/><path d="M1.6 3 V13.6" stroke="#6c6c74" stroke-width="1"/><rect x="4.9" y="1" width="7.3" height="5.4" fill="#fff"/><rect x="4.9" y="1" width="4.2" height="1.9" fill="#88f4f4"/><rect x="10" y="1" width="2.2" height=".9" fill="#000"/><rect x="10" y="1.9" width="2.2" height="1.2" fill="#fff"/><rect x="5.2" y="3.2" width="5.4" height=".6" fill="#c8c8c8"/><rect x="5.1" y="4" width="7.1" height="1.3" fill="#98f8f8"/><rect x="2" y="2.9" width="1.9" height="4.2" fill="#fff4b0"/><rect x="3.2" y="2.9" width=".7" height="4.2" fill="#d8c440"/><path d="M1.3 8.3 L2.2 7.2 H6.1 V6 H14 V12.9 H2 V10.2 L1.3 9.6 Z" fill="#c2b444"/><rect x="6.1" y="6" width="7.9" height="1" fill="#a88c10"/><rect x="12.9" y="4.9" width="1.1" height="3.8" fill="#dccc50"/><rect x="6.3" y="7.2" width="5.5" height=".8" fill="#fff8d0"/><rect x="1.2" y="8.1" width="3.7" height=".9" fill="#fff8d0"/><rect x="2" y="11.9" width="12" height="1" fill="#caa408"/></svg><span class="cy" style="left:49.5px;letter-spacing:-0.85px">Поручение на продажу</span></div><div class="row" style="top:290px"><svg width="8" height="8" viewBox="0 0 8 8" style="left:22px;top:5px"><path d="M2 2h4v4h-4z" fill="#ccccff"/><path d="M3 1h1v1h-1zM4 1h1v1h-1zM1 3h1v1h-1zM1 4h1v1h-1zM6 3h1v1h-1zM6 4h1v1h-1zM3 6h1v1h-1zM4 6h1v1h-1z" fill="#ffffff"/><path d="M3 0h1v1h-1zM4 0h1v1h-1zM1 1h1v1h-1zM2 1h1v1h-1zM5 1h1v1h-1zM6 1h1v1h-1zM1 2h1v1h-1zM6 2h1v1h-1zM0 3h1v1h-1zM7 3h1v1h-1zM0 4h1v1h-1zM7 4h1v1h-1zM1 5h1v1h-1zM6 5h1v1h-1zM1 6h1v1h-1zM2 6h1v1h-1zM5 6h1v1h-1zM6 6h1v1h-1zM3 7h1v1h-1zM4 7h1v1h-1z" fill="#000"/></svg><svg width="17" height="17" viewBox="0 0 17 17" style="left:33px;top:0px"><path d="M4 1.2 L5 0.15 H10.9 L13.2 2.3 V3.6 H15.7 V14 H1.6 V10.6 L0.2 9.6 V8.4 L1.6 7.3 V2.9 L2 2.1 H4 Z" fill="#000"/><path d="M1.6 3 V13.6" stroke="#6c6c74" stroke-width="1"/><rect x="4.9" y="1" width="7.3" height="5.4" fill="#fff"/><rect x="4.9" y="1" width="4.2" height="1.9" fill="#88f4f4"/><rect x="10" y="1" width="2.2" height=".9" fill="#000"/><rect x="10" y="1.9" width="2.2" height="1.2" fill="#fff"/><rect x="5.2" y="3.2" width="5.4" height=".6" fill="#c8c8c8"/><rect x="5.1" y="4" width="7.1" height="1.3" fill="#98f8f8"/><rect x="2" y="2.9" width="1.9" height="4.2" fill="#fff4b0"/><rect x="3.2" y="2.9" width=".7" height="4.2" fill="#d8c440"/><path d="M1.3 8.3 L2.2 7.2 H6.1 V6 H14 V12.9 H2 V10.2 L1.3 9.6 Z" fill="#c2b444"/><rect x="6.1" y="6" width="7.9" height="1" fill="#a88c10"/><rect x="12.9" y="4.9" width="1.1" height="3.8" fill="#dccc50"/><rect x="6.3" y="7.2" width="5.5" height=".8" fill="#fff8d0"/><rect x="1.2" y="8.1" width="3.7" height=".9" fill="#fff8d0"/><rect x="2" y="11.9" width="12" height="1" fill="#caa408"/></svg><span class="cy" style="left:49.5px;letter-spacing:-0.53px">Валютный аккредитив</span></div><div class="row" style="top:307px"><svg width="8" height="8" viewBox="0 0 8 8" style="left:22px;top:5px"><path d="M2 2h4v4h-4z" fill="#ccccff"/><path d="M3 1h1v1h-1zM4 1h1v1h-1zM1 3h1v1h-1zM1 4h1v1h-1zM6 3h1v1h-1zM6 4h1v1h-1zM3 6h1v1h-1zM4 6h1v1h-1z" fill="#ffffff"/><path d="M3 0h1v1h-1zM4 0h1v1h-1zM1 1h1v1h-1zM2 1h1v1h-1zM5 1h1v1h-1zM6 1h1v1h-1zM1 2h1v1h-1zM6 2h1v1h-1zM0 3h1v1h-1zM7 3h1v1h-1zM0 4h1v1h-1zM7 4h1v1h-1zM1 5h1v1h-1zM6 5h1v1h-1zM1 6h1v1h-1zM2 6h1v1h-1zM5 6h1v1h-1zM6 6h1v1h-1zM3 7h1v1h-1zM4 7h1v1h-1z" fill="#000"/></svg><svg width="17" height="17" viewBox="0 0 17 17" style="left:33px;top:0px"><path d="M4 1.2 L5 0.15 H10.9 L13.2 2.3 V3.6 H15.7 V14 H1.6 V10.6 L0.2 9.6 V8.4 L1.6 7.3 V2.9 L2 2.1 H4 Z" fill="#000"/><path d="M1.6 3 V13.6" stroke="#6c6c74" stroke-width="1"/><rect x="4.9" y="1" width="7.3" height="5.4" fill="#fff"/><rect x="4.9" y="1" width="4.2" height="1.9" fill="#88f4f4"/><rect x="10" y="1" width="2.2" height=".9" fill="#000"/><rect x="10" y="1.9" width="2.2" height="1.2" fill="#fff"/><rect x="5.2" y="3.2" width="5.4" height=".6" fill="#c8c8c8"/><rect x="5.1" y="4" width="7.1" height="1.3" fill="#98f8f8"/><rect x="2" y="2.9" width="1.9" height="4.2" fill="#fff4b0"/><rect x="3.2" y="2.9" width=".7" height="4.2" fill="#d8c440"/><path d="M1.3 8.3 L2.2 7.2 H6.1 V6 H14 V12.9 H2 V10.2 L1.3 9.6 Z" fill="#c2b444"/><rect x="6.1" y="6" width="7.9" height="1" fill="#a88c10"/><rect x="12.9" y="4.9" width="1.1" height="3.8" fill="#dccc50"/><rect x="6.3" y="7.2" width="5.5" height=".8" fill="#fff8d0"/><rect x="1.2" y="8.1" width="3.7" height=".9" fill="#fff8d0"/><rect x="2" y="11.9" width="12" height="1" fill="#caa408"/></svg><span class="cy" style="left:49.5px;letter-spacing:-0.70px">Обратная продажа</span></div><div class="row" style="top:324px"><svg width="8" height="8" viewBox="0 0 8 8" style="left:22px;top:5px"><path d="M2 2h4v4h-4z" fill="#ccccff"/><path d="M3 1h1v1h-1zM4 1h1v1h-1zM1 3h1v1h-1zM1 4h1v1h-1zM6 3h1v1h-1zM6 4h1v1h-1zM3 6h1v1h-1zM4 6h1v1h-1z" fill="#ffffff"/><path d="M3 0h1v1h-1zM4 0h1v1h-1zM1 1h1v1h-1zM2 1h1v1h-1zM5 1h1v1h-1zM6 1h1v1h-1zM1 2h1v1h-1zM6 2h1v1h-1zM0 3h1v1h-1zM7 3h1v1h-1zM0 4h1v1h-1zM7 4h1v1h-1zM1 5h1v1h-1zM6 5h1v1h-1zM1 6h1v1h-1zM2 6h1v1h-1zM5 6h1v1h-1zM6 6h1v1h-1zM3 7h1v1h-1zM4 7h1v1h-1z" fill="#000"/></svg><svg width="17" height="17" viewBox="0 0 17 17" style="left:33px;top:0px"><path d="M4 1.2 L5 0.15 H10.9 L13.2 2.3 V3.6 H15.7 V14 H1.6 V10.6 L0.2 9.6 V8.4 L1.6 7.3 V2.9 L2 2.1 H4 Z" fill="#000"/><path d="M1.6 3 V13.6" stroke="#6c6c74" stroke-width="1"/><rect x="4.9" y="1" width="7.3" height="5.4" fill="#fff"/><rect x="4.9" y="1" width="4.2" height="1.9" fill="#88f4f4"/><rect x="10" y="1" width="2.2" height=".9" fill="#000"/><rect x="10" y="1.9" width="2.2" height="1.2" fill="#fff"/><rect x="5.2" y="3.2" width="5.4" height=".6" fill="#c8c8c8"/><rect x="5.1" y="4" width="7.1" height="1.3" fill="#98f8f8"/><rect x="2" y="2.9" width="1.9" height="4.2" fill="#fff4b0"/><rect x="3.2" y="2.9" width=".7" height="4.2" fill="#d8c440"/><path d="M1.3 8.3 L2.2 7.2 H6.1 V6 H14 V12.9 H2 V10.2 L1.3 9.6 Z" fill="#c2b444"/><rect x="6.1" y="6" width="7.9" height="1" fill="#a88c10"/><rect x="12.9" y="4.9" width="1.1" height="3.8" fill="#dccc50"/><rect x="6.3" y="7.2" width="5.5" height=".8" fill="#fff8d0"/><rect x="1.2" y="8.1" width="3.7" height=".9" fill="#fff8d0"/><rect x="2" y="11.9" width="12" height="1" fill="#caa408"/></svg><span class="cy" style="left:49.5px;letter-spacing:-0.74px">Поручение на перевод с тра</span></div><div class="row" style="top:341px"><svg width="8" height="8" viewBox="0 0 8 8" style="left:22px;top:5px"><path d="M2 2h4v4h-4z" fill="#ccccff"/><path d="M3 1h1v1h-1zM4 1h1v1h-1zM1 3h1v1h-1zM1 4h1v1h-1zM6 3h1v1h-1zM6 4h1v1h-1zM3 6h1v1h-1zM4 6h1v1h-1z" fill="#ffffff"/><path d="M3 0h1v1h-1zM4 0h1v1h-1zM1 1h1v1h-1zM2 1h1v1h-1zM5 1h1v1h-1zM6 1h1v1h-1zM1 2h1v1h-1zM6 2h1v1h-1zM0 3h1v1h-1zM7 3h1v1h-1zM0 4h1v1h-1zM7 4h1v1h-1zM1 5h1v1h-1zM6 5h1v1h-1zM1 6h1v1h-1zM2 6h1v1h-1zM5 6h1v1h-1zM6 6h1v1h-1zM3 7h1v1h-1zM4 7h1v1h-1z" fill="#000"/></svg><svg width="17" height="17" viewBox="0 0 17 17" style="left:33px;top:0px"><path d="M4 1.2 L5 0.15 H10.9 L13.2 2.3 V3.6 H15.7 V14 H1.6 V10.6 L0.2 9.6 V8.4 L1.6 7.3 V2.9 L2 2.1 H4 Z" fill="#000"/><path d="M1.6 3 V13.6" stroke="#6c6c74" stroke-width="1"/><rect x="4.9" y="1" width="7.3" height="5.4" fill="#fff"/><rect x="4.9" y="1" width="4.2" height="1.9" fill="#88f4f4"/><rect x="10" y="1" width="2.2" height=".9" fill="#000"/><rect x="10" y="1.9" width="2.2" height="1.2" fill="#fff"/><rect x="5.2" y="3.2" width="5.4" height=".6" fill="#c8c8c8"/><rect x="5.1" y="4" width="7.1" height="1.3" fill="#98f8f8"/><rect x="2" y="2.9" width="1.9" height="4.2" fill="#fff4b0"/><rect x="3.2" y="2.9" width=".7" height="4.2" fill="#d8c440"/><path d="M1.3 8.3 L2.2 7.2 H6.1 V6 H14 V12.9 H2 V10.2 L1.3 9.6 Z" fill="#c2b444"/><rect x="6.1" y="6" width="7.9" height="1" fill="#a88c10"/><rect x="12.9" y="4.9" width="1.1" height="3.8" fill="#dccc50"/><rect x="6.3" y="7.2" width="5.5" height=".8" fill="#fff8d0"/><rect x="1.2" y="8.1" width="3.7" height=".9" fill="#fff8d0"/><rect x="2" y="11.9" width="12" height="1" fill="#caa408"/></svg><span class="cy" style="left:49.5px;letter-spacing:-0.79px">Поручение на покупку валю</span></div><div class="row" style="top:358px"><svg width="8" height="8" viewBox="0 0 8 8" style="left:22px;top:5px"><path d="M2 2h4v4h-4z" fill="#ccccff"/><path d="M3 1h1v1h-1zM4 1h1v1h-1zM1 3h1v1h-1zM1 4h1v1h-1zM6 3h1v1h-1zM6 4h1v1h-1zM3 6h1v1h-1zM4 6h1v1h-1z" fill="#ffffff"/><path d="M3 0h1v1h-1zM4 0h1v1h-1zM1 1h1v1h-1zM2 1h1v1h-1zM5 1h1v1h-1zM6 1h1v1h-1zM1 2h1v1h-1zM6 2h1v1h-1zM0 3h1v1h-1zM7 3h1v1h-1zM0 4h1v1h-1zM7 4h1v1h-1zM1 5h1v1h-1zM6 5h1v1h-1zM1 6h1v1h-1zM2 6h1v1h-1zM5 6h1v1h-1zM6 6h1v1h-1zM3 7h1v1h-1zM4 7h1v1h-1z" fill="#000"/></svg><svg width="17" height="17" viewBox="0 0 17 17" style="left:33px;top:0px"><path d="M4 1.2 L5 0.15 H10.9 L13.2 2.3 V3.6 H15.7 V14 H1.6 V10.6 L0.2 9.6 V8.4 L1.6 7.3 V2.9 L2 2.1 H4 Z" fill="#000"/><path d="M1.6 3 V13.6" stroke="#6c6c74" stroke-width="1"/><rect x="4.9" y="1" width="7.3" height="5.4" fill="#fff"/><rect x="4.9" y="1" width="4.2" height="1.9" fill="#88f4f4"/><rect x="10" y="1" width="2.2" height=".9" fill="#000"/><rect x="10" y="1.9" width="2.2" height="1.2" fill="#fff"/><rect x="5.2" y="3.2" width="5.4" height=".6" fill="#c8c8c8"/><rect x="5.1" y="4" width="7.1" height="1.3" fill="#98f8f8"/><rect x="2" y="2.9" width="1.9" height="4.2" fill="#fff4b0"/><rect x="3.2" y="2.9" width=".7" height="4.2" fill="#d8c440"/><path d="M1.3 8.3 L2.2 7.2 H6.1 V6 H14 V12.9 H2 V10.2 L1.3 9.6 Z" fill="#c2b444"/><rect x="6.1" y="6" width="7.9" height="1" fill="#a88c10"/><rect x="12.9" y="4.9" width="1.1" height="3.8" fill="#dccc50"/><rect x="6.3" y="7.2" width="5.5" height=".8" fill="#fff8d0"/><rect x="1.2" y="8.1" width="3.7" height=".9" fill="#fff8d0"/><rect x="2" y="11.9" width="12" height="1" fill="#caa408"/></svg><span class="cy" style="left:49.5px;letter-spacing:-0.52px">Поручение на обязательну</span></div><div class="row" style="top:375px"><svg width="8" height="8" viewBox="0 0 8 8" style="left:22px;top:5px"><path d="M2 2h4v4h-4z" fill="#ccccff"/><path d="M3 1h1v1h-1zM4 1h1v1h-1zM1 3h1v1h-1zM1 4h1v1h-1zM6 3h1v1h-1zM6 4h1v1h-1zM3 6h1v1h-1zM4 6h1v1h-1z" fill="#ffffff"/><path d="M3 0h1v1h-1zM4 0h1v1h-1zM1 1h1v1h-1zM2 1h1v1h-1zM5 1h1v1h-1zM6 1h1v1h-1zM1 2h1v1h-1zM6 2h1v1h-1zM0 3h1v1h-1zM7 3h1v1h-1zM0 4h1v1h-1zM7 4h1v1h-1zM1 5h1v1h-1zM6 5h1v1h-1zM1 6h1v1h-1zM2 6h1v1h-1zM5 6h1v1h-1zM6 6h1v1h-1zM3 7h1v1h-1zM4 7h1v1h-1z" fill="#000"/></svg><svg width="17" height="17" viewBox="0 0 17 17" style="left:33px;top:0px"><path d="M4 1.2 L5 0.15 H10.9 L13.2 2.3 V3.6 H15.7 V14 H1.6 V10.6 L0.2 9.6 V8.4 L1.6 7.3 V2.9 L2 2.1 H4 Z" fill="#000"/><path d="M1.6 3 V13.6" stroke="#6c6c74" stroke-width="1"/><rect x="4.9" y="1" width="7.3" height="5.4" fill="#fff"/><rect x="4.9" y="1" width="4.2" height="1.9" fill="#88f4f4"/><rect x="10" y="1" width="2.2" height=".9" fill="#000"/><rect x="10" y="1.9" width="2.2" height="1.2" fill="#fff"/><rect x="5.2" y="3.2" width="5.4" height=".6" fill="#c8c8c8"/><rect x="5.1" y="4" width="7.1" height="1.3" fill="#98f8f8"/><rect x="2" y="2.9" width="1.9" height="4.2" fill="#fff4b0"/><rect x="3.2" y="2.9" width=".7" height="4.2" fill="#d8c440"/><path d="M1.3 8.3 L2.2 7.2 H6.1 V6 H14 V12.9 H2 V10.2 L1.3 9.6 Z" fill="#c2b444"/><rect x="6.1" y="6" width="7.9" height="1" fill="#a88c10"/><rect x="12.9" y="4.9" width="1.1" height="3.8" fill="#dccc50"/><rect x="6.3" y="7.2" width="5.5" height=".8" fill="#fff8d0"/><rect x="1.2" y="8.1" width="3.7" height=".9" fill="#fff8d0"/><rect x="2" y="11.9" width="12" height="1" fill="#caa408"/></svg><span class="cy" style="left:49.5px;letter-spacing:-0.77px">Заявка на выдачу наличной</span></div><div class="row" style="top:392px"><svg width="8" height="8" viewBox="0 0 8 8" style="left:22px;top:5px"><path d="M2 2h4v4h-4z" fill="#ccccff"/><path d="M3 1h1v1h-1zM4 1h1v1h-1zM1 3h1v1h-1zM1 4h1v1h-1zM6 3h1v1h-1zM6 4h1v1h-1zM3 6h1v1h-1zM4 6h1v1h-1z" fill="#ffffff"/><path d="M3 0h1v1h-1zM4 0h1v1h-1zM1 1h1v1h-1zM2 1h1v1h-1zM5 1h1v1h-1zM6 1h1v1h-1zM1 2h1v1h-1zM6 2h1v1h-1zM0 3h1v1h-1zM7 3h1v1h-1zM0 4h1v1h-1zM7 4h1v1h-1zM1 5h1v1h-1zM6 5h1v1h-1zM1 6h1v1h-1zM2 6h1v1h-1zM5 6h1v1h-1zM6 6h1v1h-1zM3 7h1v1h-1zM4 7h1v1h-1z" fill="#000"/></svg><svg width="17" height="17" viewBox="0 0 17 17" style="left:33px;top:0px"><path d="M4 1.2 L5 0.15 H10.9 L13.2 2.3 V3.6 H15.7 V14 H1.6 V10.6 L0.2 9.6 V8.4 L1.6 7.3 V2.9 L2 2.1 H4 Z" fill="#000"/><path d="M1.6 3 V13.6" stroke="#6c6c74" stroke-width="1"/><rect x="4.9" y="1" width="7.3" height="5.4" fill="#fff"/><rect x="4.9" y="1" width="4.2" height="1.9" fill="#88f4f4"/><rect x="10" y="1" width="2.2" height=".9" fill="#000"/><rect x="10" y="1.9" width="2.2" height="1.2" fill="#fff"/><rect x="5.2" y="3.2" width="5.4" height=".6" fill="#c8c8c8"/><rect x="5.1" y="4" width="7.1" height="1.3" fill="#98f8f8"/><rect x="2" y="2.9" width="1.9" height="4.2" fill="#fff4b0"/><rect x="3.2" y="2.9" width=".7" height="4.2" fill="#d8c440"/><path d="M1.3 8.3 L2.2 7.2 H6.1 V6 H14 V12.9 H2 V10.2 L1.3 9.6 Z" fill="#c2b444"/><rect x="6.1" y="6" width="7.9" height="1" fill="#a88c10"/><rect x="12.9" y="4.9" width="1.1" height="3.8" fill="#dccc50"/><rect x="6.3" y="7.2" width="5.5" height=".8" fill="#fff8d0"/><rect x="1.2" y="8.1" width="3.7" height=".9" fill="#fff8d0"/><rect x="2" y="11.9" width="12" height="1" fill="#caa408"/></svg><span class="cy" style="left:49.5px;letter-spacing:-0.60px">Отчет о выданной налично</span></div><div class="row" style="top:409px"><svg width="8" height="8" viewBox="0 0 8 8" style="left:6px;top:5px"><path d="M2 2h4v4h-4z" fill="#7272b2"/><path d="M3 1h1v1h-1zM4 1h1v1h-1zM1 3h1v1h-1zM1 4h1v1h-1zM6 3h1v1h-1zM6 4h1v1h-1zM3 6h1v1h-1zM4 6h1v1h-1z" fill="#dcdcff"/><path d="M3 0h1v1h-1zM4 0h1v1h-1zM1 1h1v1h-1zM2 1h1v1h-1zM5 1h1v1h-1zM6 1h1v1h-1zM1 2h1v1h-1zM6 2h1v1h-1zM0 3h1v1h-1zM7 3h1v1h-1zM0 4h1v1h-1zM7 4h1v1h-1zM1 5h1v1h-1zM6 5h1v1h-1zM1 6h1v1h-1zM2 6h1v1h-1zM5 6h1v1h-1zM6 6h1v1h-1zM3 7h1v1h-1zM4 7h1v1h-1z" fill="#000"/></svg><svg width="17" height="17" viewBox="0 0 17 17" style="left:17px;top:0px"><rect x=".3" y="5.9" width="15.4" height="9.5" fill="#000"/><path d="M1.85 6.2 L6 9.4 H10 L14.15 6.2 V14.1 H1.85 Z" fill="#d4c454"/><path d="M6 9.6 H10 L13.6 13.7 H2.4 Z" fill="#c8ac2c"/><path d="M5.9 9.5 L2.3 13.2 M10.1 9.5 L13.7 13.2" stroke="#4c4000" stroke-width=".8" stroke-dasharray="1.1 .6"/><path d="M2 13.4 H14" stroke="#c4a010" stroke-width="1.2"/><path d="M0.5 3.6 L6.6 0.1 L8.6 0.9 L12.6 4.6 L14.4 6 L10.4 9.4 H5.8 L1.6 6 Z" fill="#000"/><path d="M2 3.9 L6.7 1.4 L11.6 5.4 L9.9 9.3 H6.1 Z" fill="#f2f2f6"/><path d="M3.1 4.2 L6.6 7.7" stroke="#ffa0a0" stroke-width="1"/><path d="M5.2 4.4 h1.2 M7 5.3 h1.2 M9 5.3 h1 M7.2 6.5 h1.2 M6.3 2.4 h1" stroke="#60f0f4" stroke-width="1"/></svg><span class="cy" style="left:33.5px;letter-spacing:-0.30px">Письма</span></div><div class="row" style="top:426px"><svg width="8" height="8" viewBox="0 0 8 8" style="left:22px;top:5px"><path d="M2 2h4v4h-4z" fill="#7272b2"/><path d="M3 1h1v1h-1zM4 1h1v1h-1zM1 3h1v1h-1zM1 4h1v1h-1zM6 3h1v1h-1zM6 4h1v1h-1zM3 6h1v1h-1zM4 6h1v1h-1z" fill="#dcdcff"/><path d="M3 0h1v1h-1zM4 0h1v1h-1zM1 1h1v1h-1zM2 1h1v1h-1zM5 1h1v1h-1zM6 1h1v1h-1zM1 2h1v1h-1zM6 2h1v1h-1zM0 3h1v1h-1zM7 3h1v1h-1zM0 4h1v1h-1zM7 4h1v1h-1zM1 5h1v1h-1zM6 5h1v1h-1zM1 6h1v1h-1zM2 6h1v1h-1zM5 6h1v1h-1zM6 6h1v1h-1zM3 7h1v1h-1zM4 7h1v1h-1z" fill="#000"/></svg><svg width="17" height="17" viewBox="0 0 17 17" style="left:33px;top:0px"><path d="M0.7 2.9 H2 V14 H0.7 Z" fill="#7c7c84"/><path d="M1.8 2.05 H6.1 L7.6 3.55 H15.7 V14 H1.8 Z" fill="#000"/><path d="M1.9 3.1 H5.8 L7.5 4.95 H14 V13 H1.9 Z" fill="#cec866"/><path d="M3 4 H6 L7.7 5.8 H3 Z" fill="#c6b838"/><path d="M1.9 3.1 H3 V12 H1.9 Z M1.9 3.1 H5.7 V3.9 H1.9 Z M7.9 5 H14 V5.9 H7.9 Z" fill="#fffad8"/><path d="M1.9 11.8 H14 V13 H1.9 Z" fill="#d8b814"/><path d="M0.3 9.4 L2 5.9 H4.7 V8 H9 V10.8 H4.7 V12.4 H2 Z" fill="#000"/><path d="M1.8 9.4 L3 7 H4.1 V8.9 H8 V9.9 H4.1 V11.8 H3 Z" fill="#38b4ff"/></svg><span class="cy" style="left:49.5px;letter-spacing:-0.98px">Входящие</span></div><div class="row" style="top:443px"><svg width="13" height="17" viewBox="0 0 13 17" style="left:52px;top:0px"><path d="M0.2 1.1 H5.2 L11.2 7.4 V8.6 L5.2 14.9 H0.2 V11.2 L3.9 8 L0.2 4.8 Z" fill="#000"/><path d="M1.4 2.2 H4.7 L9.8 8 L4.7 13.8 H1.4 V11.9 L5.7 8 L1.4 4.1 Z" fill="#0c8cd8"/><path d="M3 3 H4.3 L8.6 8 L6.6 8 Z" fill="#10a0f0"/></svg><span class="cy" style="left:65.5px;letter-spacing:-0.57px">Новые</span></div><div class="row" style="top:460px"><svg width="13" height="17" viewBox="0 0 13 17" style="left:52px;top:0px"><path d="M0.2 1.1 H5.2 L11.2 7.4 V8.6 L5.2 14.9 H0.2 V11.2 L3.9 8 L0.2 4.8 Z" fill="#000"/><path d="M1.4 2.2 H4.7 L9.8 8 L4.7 13.8 H1.4 V11.9 L5.7 8 L1.4 4.1 Z" fill="#0c8cd8"/><path d="M3 3 H4.3 L8.6 8 L6.6 8 Z" fill="#10a0f0"/></svg><span class="cy" style="left:65.5px;letter-spacing:-0.99px">Архивные</span></div><div class="row" style="top:477px"><svg width="8" height="8" viewBox="0 0 8 8" style="left:22px;top:5px"><path d="M2 2h4v4h-4z" fill="#ccccff"/><path d="M3 1h1v1h-1zM4 1h1v1h-1zM1 3h1v1h-1zM1 4h1v1h-1zM6 3h1v1h-1zM6 4h1v1h-1zM3 6h1v1h-1zM4 6h1v1h-1z" fill="#ffffff"/><path d="M3 0h1v1h-1zM4 0h1v1h-1zM1 1h1v1h-1zM2 1h1v1h-1zM5 1h1v1h-1zM6 1h1v1h-1zM1 2h1v1h-1zM6 2h1v1h-1zM0 3h1v1h-1zM7 3h1v1h-1zM0 4h1v1h-1zM7 4h1v1h-1zM1 5h1v1h-1zM6 5h1v1h-1zM1 6h1v1h-1zM2 6h1v1h-1zM5 6h1v1h-1zM6 6h1v1h-1zM3 7h1v1h-1zM4 7h1v1h-1z" fill="#000"/></svg><svg width="17" height="17" viewBox="0 0 17 17" style="left:33px;top:0px"><path d="M0.7 2.9 H2 V14 H0.7 Z" fill="#7c7c84"/><path d="M1.8 2.05 H6.1 L7.6 3.55 H15.7 V14 H1.8 Z" fill="#000"/><path d="M1.9 3.1 H5.8 L7.5 4.95 H14 V13 H1.9 Z" fill="#cec866"/><path d="M3 4 H6 L7.7 5.8 H3 Z" fill="#c6b838"/><path d="M1.9 3.1 H3 V12 H1.9 Z M1.9 3.1 H5.7 V3.9 H1.9 Z M7.9 5 H14 V5.9 H7.9 Z" fill="#fffad8"/><path d="M1.9 11.8 H14 V13 H1.9 Z" fill="#d8b814"/><path d="M0.3 8 H4.2 V5.9 H6.9 L8.5 9.4 L6.9 12.4 H4.2 V10.8 H0.3 Z" fill="#000"/><path d="M1.1 8.9 H5 V7 H6.1 L7.3 9.4 L6.1 11.8 H5 V9.9 H1.1 Z" fill="#38b4ff"/></svg><span class="cy" style="left:49.5px;letter-spacing:-0.97px">Исходящие</span></div><div class="row" style="top:494px"><svg width="8" height="8" viewBox="0 0 8 8" style="left:6px;top:5px"><path d="M2 2h4v4h-4z" fill="#7272b2"/><path d="M3 1h1v1h-1zM4 1h1v1h-1zM1 3h1v1h-1zM1 4h1v1h-1zM6 3h1v1h-1zM6 4h1v1h-1zM3 6h1v1h-1zM4 6h1v1h-1z" fill="#dcdcff"/><path d="M3 0h1v1h-1zM4 0h1v1h-1zM1 1h1v1h-1zM2 1h1v1h-1zM5 1h1v1h-1zM6 1h1v1h-1zM1 2h1v1h-1zM6 2h1v1h-1zM0 3h1v1h-1zM7 3h1v1h-1zM0 4h1v1h-1zM7 4h1v1h-1zM1 5h1v1h-1zM6 5h1v1h-1zM1 6h1v1h-1zM2 6h1v1h-1zM5 6h1v1h-1zM6 6h1v1h-1zM3 7h1v1h-1zM4 7h1v1h-1z" fill="#000"/></svg><svg width="18" height="17" viewBox="0 0 18 17" style="left:15px;top:0px"><rect x="3.5" y="1.5" width="13" height="13" rx="1.2" fill="#fff" stroke="#555" stroke-width="1"/><g transform="translate(5.4 4.4) scale(0.78)"><path d="M0 -5.5 L2.2 -3 L5.4 0 L2.5 2.6 L1.8 7 L0 8.7 L-1.8 7 L-2.5 2.6 L-5.4 0 L-2.2 -3 Z" fill="#ffa400"/><path d="M0 -4.1 L1.5 -1.7 L4.4 0 L1.5 1.7 L1 6.5 L-1 6.5 L-1.5 1.7 L-4.4 0 L-1.5 -1.7 Z" fill="#fff400"/><rect x="-5" y="-.6" width="9.6" height="1.2" fill="#ffff10"/><rect x="-1.2" y="-1.2" width="2.2" height="1.8" fill="#fffff4"/></g></svg><span class="cy" style="left:33.5px;letter-spacing:-0.57px">Выписка</span></div><div class="row" style="top:511px"><svg width="13" height="17" viewBox="0 0 13 17" style="left:36px;top:0px"><path d="M0.2 1.1 H5.2 L11.2 7.4 V8.6 L5.2 14.9 H0.2 V11.2 L3.9 8 L0.2 4.8 Z" fill="#000"/><path d="M1.4 2.2 H4.7 L9.8 8 L4.7 13.8 H1.4 V11.9 L5.7 8 L1.4 4.1 Z" fill="#0c8cd8"/><path d="M3 3 H4.3 L8.6 8 L6.6 8 Z" fill="#10a0f0"/></svg><span class="cy" style="left:49.5px;letter-spacing:-0.53px">Рублевая</span></div><div class="row" style="top:528px"><svg width="13" height="17" viewBox="0 0 13 17" style="left:36px;top:0px"><path d="M0.2 1.1 H5.2 L11.2 7.4 V8.6 L5.2 14.9 H0.2 V11.2 L3.9 8 L0.2 4.8 Z" fill="#000"/><path d="M1.4 2.2 H4.7 L9.8 8 L4.7 13.8 H1.4 V11.9 L5.7 8 L1.4 4.1 Z" fill="#0c8cd8"/><path d="M3 3 H4.3 L8.6 8 L6.6 8 Z" fill="#10a0f0"/></svg><span class="cy" style="left:49.5px;letter-spacing:-0.41px">Валютная</span></div><div class="row" style="top:545px"><svg width="8" height="8" viewBox="0 0 8 8" style="left:6px;top:5px"><path d="M2 2h4v4h-4z" fill="#7272b2"/><path d="M3 1h1v1h-1zM4 1h1v1h-1zM1 3h1v1h-1zM1 4h1v1h-1zM6 3h1v1h-1zM6 4h1v1h-1zM3 6h1v1h-1zM4 6h1v1h-1z" fill="#dcdcff"/><path d="M3 0h1v1h-1zM4 0h1v1h-1zM1 1h1v1h-1zM2 1h1v1h-1zM5 1h1v1h-1zM6 1h1v1h-1zM1 2h1v1h-1zM6 2h1v1h-1zM0 3h1v1h-1zM7 3h1v1h-1zM0 4h1v1h-1zM7 4h1v1h-1zM1 5h1v1h-1zM6 5h1v1h-1zM1 6h1v1h-1zM2 6h1v1h-1zM5 6h1v1h-1zM6 6h1v1h-1zM3 7h1v1h-1zM4 7h1v1h-1z" fill="#000"/></svg><svg width="17" height="17" viewBox="0 0 17 17" style="left:17px;top:0px;will-change:transform"><path d="M0.4 1.6 L1.6 0.4 H14.5 L15.7 1.6 V12.6 L14.6 13.8 H7 L4.4 16 H2 V13.8 H1.6 L0.4 12.6 Z" fill="#000"/><path d="M2 1.8 H14 V13 H6.4 L3.4 15 V13 H2 Z" fill="#ffff58"/><path d="M2.4 1.8 V13 M2 12.6 H14" stroke="#ffb440" stroke-width=".9"/><path d="M2 2.2 H14 M13.7 1.8 V13" stroke="#ffe0a0" stroke-width=".8"/><rect x="3" y="3.4" width="1.2" height="4" fill="#fffff0"/><path d="M3.2 13 L3.2 15 L5.2 13.4 Z" fill="#ffa830"/><text x="8" y="11" font-family="Liberation Serif,serif" font-weight="bold" font-size="11.5" text-anchor="middle" fill="#181828">?</text></svg><span class="cy" style="left:33.5px;letter-spacing:-0.63px">Справочники</span></div><div class="row" style="top:562px"><svg width="17" height="17" viewBox="0 0 17 17" style="left:33px;top:0px"><rect x="1.3" y="1.3" width="9.8" height="9.8" fill="#000"/><path d="M1.3 1.3 H10.2 V2 H2 V10.4 H1.3 Z" fill="#706868"/><rect x="2" y="2" width="8" height="8" fill="#30a8f8"/><path d="M2.5 9.6 V2.5 H9.6" stroke="#70c8ff" stroke-width="1" fill="none"/><rect x="3" y="3" width="1" height="1" fill="#e8f8ff"/><circle cx="10.8" cy="10.6" r="4.8" fill="#000"/><circle cx="10.3" cy="10.1" r="4.15" fill="#e80000"/><circle cx="10" cy="9.8" r="3.3" fill="#ff0808"/><circle cx="9" cy="8.6" r="1.3" fill="#ff6060"/><circle cx="8.7" cy="8.3" r=".7" fill="#fff"/></svg><span class="cy" style="left:49.5px;letter-spacing:-0.62px">Корреспонденты</span></div><div class="row" style="top:579px"><svg width="17" height="17" viewBox="0 0 17 17" style="left:33px;top:0px"><rect x="1.3" y="1.3" width="9.8" height="9.8" fill="#000"/><path d="M1.3 1.3 H10.2 V2 H2 V10.4 H1.3 Z" fill="#706868"/><rect x="2" y="2" width="8" height="8" fill="#30a8f8"/><path d="M2.5 9.6 V2.5 H9.6" stroke="#70c8ff" stroke-width="1" fill="none"/><rect x="3" y="3" width="1" height="1" fill="#e8f8ff"/><circle cx="10.8" cy="10.6" r="4.8" fill="#000"/><circle cx="10.3" cy="10.1" r="4.15" fill="#e80000"/><circle cx="10" cy="9.8" r="3.3" fill="#ff0808"/><circle cx="9" cy="8.6" r="1.3" fill="#ff6060"/><circle cx="8.7" cy="8.3" r=".7" fill="#fff"/></svg><span class="cy" style="left:49.5px;letter-spacing:-0.54px">Бенефициары</span></div></div>
<div class="a" style="left:240px;top:91px;width:1px;height:629px;background:#666"></div><div class="a" style="left:241px;top:91px;width:1px;height:628px;background:#fff"></div>
<div class="a" style="left:6px;top:705px;width:234px;height:1px;background:#666"></div>
<div class="a" style="left:5px;top:706px;width:235px;height:13px;background:#fff"></div>
<div class="a" style="left:6px;top:706px;width:234px;height:13px;background:#ccccff"></div>
<div class="a" style="left:18px;top:706px;width:1px;height:13px;background:#666"></div>
<div class="a" style="left:19px;top:706px;width:108px;height:13px;background:#9999cc;border-style:solid;border-width:1px;border-color:#ccccff #666699 #666699 #ccccff"></div>
<div class="a" style="left:127px;top:706px;width:1px;height:13px;background:#fff"></div>
<div class="a" style="left:226px;top:706px;width:1px;height:13px;background:#666"></div>
<div class="a" style="left:227px;top:706px;width:1px;height:13px;background:#fff"></div>
<svg width="14" height="15" viewBox="0 0 14 15" style="position:absolute;left:5px;top:705px"><path d="M10.1 3.4 L2.1 7.5" stroke="#505050" stroke-width="1"/><path d="M2.1 7.6 L9.9 13 V3.6" stroke="#fff" stroke-width="1" fill="none"/></svg><svg width="14" height="15" viewBox="0 0 14 15" style="position:absolute;left:228px;top:705px"><path d="M3.5 12.6 V3.5 L10.7 7.4" stroke="#505050" stroke-width="1" fill="none"/><path d="M10.7 7.6 L3.9 12.6" stroke="#fff" stroke-width="1"/></svg><svg width="8" height="8" viewBox="0 0 8 8" style="position:absolute;left:69px;top:709px"><circle cx="4" cy="4" r="2.3" fill="none" stroke="#e4e4ff" stroke-width="1"/></svg>
<div class="a" style="left:252px;top:95px;width:520px;height:621px;background:#fff"></div>
<div class="a" style="left:251px;top:94px;width:520px;height:621px;border:1px solid #666;background:#fff"></div>
<div class="a" style="left:301px;top:112px;width:1px;height:602px;background:#666"></div>
<div class="a" style="left:381px;top:112px;width:1px;height:602px;background:#666"></div>
<div class="a" style="left:478px;top:112px;width:1px;height:602px;background:#666"></div>
<div class="a" style="left:549px;top:112px;width:1px;height:602px;background:#666"></div>
<div class="a" style="left:649px;top:112px;width:1px;height:602px;background:#666"></div>
<div class="a" style="left:252px;top:95px;width:48px;height:17px;background:#fff"></div>
<div class="a" style="left:251px;top:94px;width:48px;height:17px;background:#cccccc;border:1px solid #666;border-left-width:1px"></div>
<div class="a" style="left:252px;top:95px;width:46px;height:15px;border-style:solid;border-color:#fff;border-width:1px 0 0 1px"></div>
<div class="a cell lat" style="left:268.5px;top:95px">N<span style="letter-spacing:-.6px"> ...</span></div>
<div class="a" style="left:301px;top:95px;width:79px;height:17px;background:#fff"></div>
<div class="a" style="left:300px;top:94px;width:79px;height:17px;background:#cccccc;border:1px solid #666;border-left-width:1px"></div>
<div class="a" style="left:301px;top:95px;width:77px;height:15px;border-style:solid;border-color:#fff;border-width:1px 0 0 1px"></div>
<div class="a cell cy" style="right:406.82px;top:95px;letter-spacing:-0.68px">Дата док.</div>
<div class="a" style="left:381px;top:95px;width:97px;height:17px;background:#fff"></div>
<div class="a" style="left:380px;top:94px;width:97px;height:17px;background:#cccccc;border:1px solid #666;border-left-width:1px"></div>
<div class="a" style="left:381px;top:95px;width:95px;height:15px;border-style:solid;border-color:#fff;border-width:1px 0 0 1px"></div>
<div class="a cell cy" style="right:308.98px;top:95px;letter-spacing:-0.03px">Сумма</div>
<div class="a" style="left:479px;top:95px;width:70px;height:17px;background:#fff"></div>
<div class="a" style="left:478px;top:94px;width:70px;height:17px;background:#cccccc;border:1px solid #666;border-left-width:1px"></div>
<div class="a" style="left:479px;top:95px;width:68px;height:15px;border-style:solid;border-color:#fff;border-width:1px 0 0 1px"></div>
<div class="a cell cy" style="right:237.54px;top:95px;letter-spacing:-0.16px">Валюта</div>
<div class="a" style="left:550px;top:95px;width:98px;height:17px;background:#fff"></div>
<div class="a" style="left:549px;top:94px;width:98px;height:17px;background:#cccccc;border:1px solid #666;border-left-width:1px"></div>
<div class="a" style="left:550px;top:95px;width:96px;height:15px;border-style:solid;border-color:#fff;border-width:1px 0 0 1px"></div>
<div class="a cell cy" style="left:550.2px;top:95px;letter-spacing:0.20px">Статус</div>
<div class="a" style="left:649px;top:95px;width:123px;height:17px;background:#fff"></div>
<div class="a" style="left:648px;top:94px;width:123px;height:17px;background:#cccccc;border:1px solid #666;border-left-width:0"></div>
<div class="a" style="left:649px;top:95px;width:121px;height:15px;border-style:solid;border-color:#fff;border-width:1px 0 0 1px"></div>
<div class="a" style="left:770px;top:94px;width:1px;height:621px;background:#666"></div><div class="a" style="left:771px;top:95px;width:1px;height:621px;background:#fff"></div>
<svg width="12" height="10" viewBox="0 0 12 10" style="position:absolute;left:255px;top:100px"><path d="M0.5 0.5 H9.5 M1 1 L5 8" stroke="#666" stroke-width="1" fill="none"/><path d="M9 1 L5 8" stroke="#fff" stroke-width="1.2" fill="none"/></svg>
<div class="a cell lat" style="left:255px;top:112px">1</div>
<div class="a cell lat latr" style="right:406.4px;top:112px">27.11.2001</div>
<div class="a cell lat latr" style="right:305.1px;top:112px">112.00</div>
<div class="a cell lat latr" style="right:234.29999999999995px;top:112px;transform:scaleX(.95)">USD</div>
<div class="a cell cy st" style="left:550.6px;top:112px;letter-spacing:-0.48px">На обработке</div>
<div class="a cell lat" style="left:255px;top:129px">3</div>
<div class="a cell lat latr" style="right:406.4px;top:129px">04.12.2001</div>
<div class="a cell lat latr" style="right:305.1px;top:129px">1000.00</div>
<div class="a cell lat latr" style="right:234.29999999999995px;top:129px;transform:scaleX(.95)">DEM</div>
<div class="a cell cy st" style="left:550.6px;top:129px;letter-spacing:-0.48px">На обработке</div>
<div class="a cell lat" style="left:255px;top:146px">4</div>
<div class="a cell lat latr" style="right:406.4px;top:146px">06.12.2001</div>
<div class="a cell lat latr" style="right:305.1px;top:146px">1.00</div>
<div class="a cell lat latr" style="right:234.29999999999995px;top:146px;transform:scaleX(.95)">USD</div>
<div class="a cell cy" style="left:550.6px;top:146px;letter-spacing:-0.23px">Новый</div>
<div class="a" style="left:7px;top:725px;width:769px;height:27px;border:1px solid #fff"></div><div class="a" style="left:6px;top:724px;width:769px;height:27px;border:1px solid #666;"></div>
<div class="a" style="left:10px;top:728px;width:130px;height:20px;border-style:solid;border-width:1px 0 0 1px;border-color:#999"></div><div class="a" style="left:11px;top:729px;width:129px;height:19px;border-style:solid;border-width:1px;border-color:#666 #fff #fff #666"></div>
<div class="a" style="left:143px;top:728px;width:466px;height:20px;border-style:solid;border-width:1px 0 0 1px;border-color:#999"></div><div class="a" style="left:144px;top:729px;width:465px;height:19px;border-style:solid;border-width:1px;border-color:#666 #fff #fff #666"></div>
<div class="a" style="left:611px;top:728px;width:161px;height:20px;border-style:solid;border-width:1px 0 0 1px;border-color:#999"></div><div class="a" style="left:612px;top:729px;width:160px;height:19px;border-style:solid;border-width:1px;border-color:#666 #fff #fff #666"></div>
<div class="a cell lat" style="left:615px;top:730px;transform:scaleX(.893)">10.12.01 19:24 GMT+03:00</div>
</body></html>
